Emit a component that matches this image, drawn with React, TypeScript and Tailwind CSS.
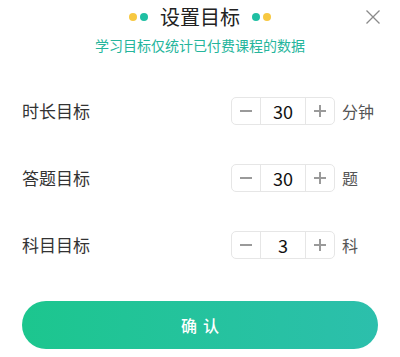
import React, { useState } from 'react';

const font = { fontFamily: '"Noto Sans CJK SC", "Noto Sans", sans-serif' };

type Goal = { label: string; unit: string; value: number };

const Stepper: React.FC<{ value: number; onChange: (v: number) => void }> = ({ value, onChange }) => (
  <div className="flex h-[28px] w-[104px] items-stretch rounded-[5px] border border-[#e6e6e6]">
    <button onClick={() => onChange(Math.max(0, value - 1))} className="flex w-[28px] items-center justify-center">
      <span className="block h-[1.5px] w-[12px] bg-[#9a9a9a]" />
    </button>
    <div className="flex flex-1 items-center justify-center border-x border-[#e6e6e6] text-[18px] leading-none text-[#111]">
      {value}
    </div>
    <button onClick={() => onChange(value + 1)} className="relative flex w-[28px] items-center justify-center">
      <span className="block h-[1.5px] w-[12px] bg-[#9a9a9a]" />
      <span className="absolute block h-[12px] w-[1.5px] bg-[#9a9a9a]" />
    </button>
  </div>
);

const App: React.FC = () => {
  const [goals, setGoals] = useState<Goal[]>([
    { label: '时长目标', unit: '分钟', value: 30 },
    { label: '答题目标', unit: '题', value: 30 },
    { label: '科目目标', unit: '科', value: 3 },
  ]);

  const update = (i: number, v: number) =>
    setGoals(goals.map((g, idx) => (idx === i ? { ...g, value: v } : g)));

  return (
    <div className="relative h-[357px] w-[400px] overflow-hidden bg-white" style={font}>
      <button className="absolute right-[19px] top-[9px] h-[16px] w-[16px]">
        <svg viewBox="0 0 16 16" className="h-full w-full" fill="none" stroke="#8a8a8a" strokeWidth="1.3">
          <path d="M1.5 1.5 L14.5 14.5 M14.5 1.5 L1.5 14.5" />
        </svg>
      </button>

      <div className="flex items-center justify-center pt-[3px]">
        <span className="h-[8px] w-[8px] rounded-full bg-[#f7c841]" />
        <span className="ml-[3px] h-[8px] w-[8px] rounded-full bg-[#1fbfa3]" />
        <span className="mx-[12px] text-[20px] leading-[28px] text-[#222]">设置目标</span>
        <span className="h-[8px] w-[8px] rounded-full bg-[#1fbfa3]" />
        <span className="ml-[3px] h-[8px] w-[8px] rounded-full bg-[#f7c841]" />
      </div>
      <p className="mt-[4px] text-center text-[14px] leading-[20px] text-[#25b59c]">
        学习目标仅统计已付费课程的数据
      </p>

      <div className="mt-[42px] flex flex-col gap-[39px] px-[22px]">
        {goals.map((g, i) => (
          <div key={g.label} className="flex h-[28px] items-center">
            <span className="flex-1 text-[17px] text-[#333]">{g.label}</span>
            <Stepper value={g.value} onChange={v => update(i, v)} />
            <span className="ml-[7px] w-[36px] text-[16px] text-[#555]">{g.unit}</span>
          </div>
        ))}
      </div>

      <div className="mt-[42px] px-[22px]">
        <button className="flex h-[48px] w-full items-center justify-center gap-[6px] rounded-full bg-gradient-to-r from-[#1cc68e] to-[#2cbfac] text-[16px] font-medium text-white">
          <span>确</span>
          <span>认</span>
        </button>
      </div>
    </div>
  );
};

export default App;
